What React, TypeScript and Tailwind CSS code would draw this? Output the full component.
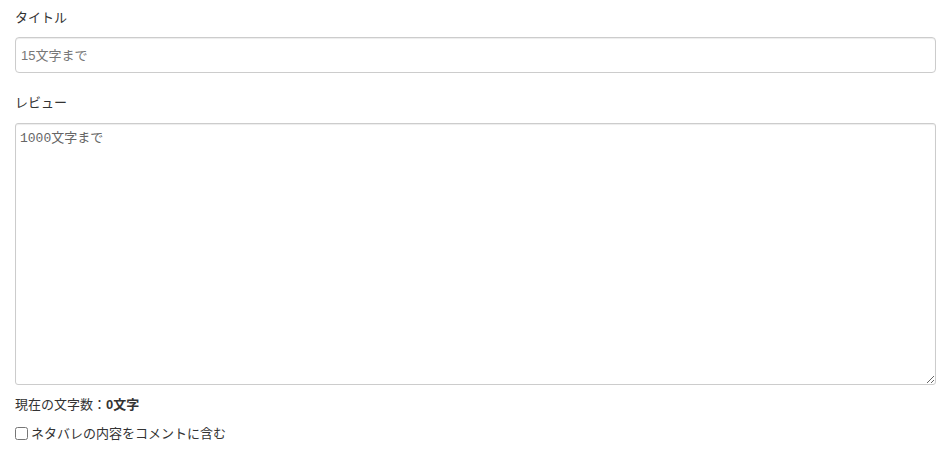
import { useState } from "react";

export default function App() {
  const [title, setTitle] = useState("");
  const [review, setReview] = useState("");
  const [spoiler, setSpoiler] = useState(false);

  return (
    <div className="min-h-screen bg-white pt-[8px] pl-[15px] pr-[10px] text-[13px] text-[#333] font-['Liberation_Sans','Noto_Sans_CJK_JP',sans-serif]">
      {/* Title */}
      <label className="block h-[19px] leading-[19px]">タイトル</label>
      <input
        type="text"
        value={title}
        onChange={(e) => setTitle(e.target.value)}
        placeholder="15文字まで"
        className="mt-[10px] block w-full h-[36px] px-[5px] rounded-[4px] border border-[#ccc] shadow-[inset_0_1px_1px_rgba(0,0,0,0.075)] text-[13px] font-['Liberation_Sans','Noto_Sans_CJK_JP',sans-serif] placeholder:text-[#777] outline-none"
      />

      {/* Review */}
      <label className="mt-[20px] block h-[19px] leading-[19px]">レビュー</label>
      <textarea
        value={review}
        onChange={(e) => setReview(e.target.value)}
        placeholder="1000文字まで"
        className="mt-[11px] block w-full h-[262px] px-[4px] py-[6px] rounded-[3px] border border-[#ccc] shadow-[inset_0_1px_1px_rgba(0,0,0,0.075)] text-[13px] leading-[18px] font-['Liberation_Mono','Noto_Sans_CJK_JP',monospace] placeholder:text-[#666] outline-none"
      />

      <p className="mt-[10px] h-[19px] leading-[19px]">
        現在の文字数：<span className="font-bold">{review.length}文字</span>
      </p>

      <label className="mt-[10px] flex items-center h-[19px] leading-[19px]">
        <input
          type="checkbox"
          checked={spoiler}
          onChange={(e) => setSpoiler(e.target.checked)}
          className="m-0 mr-[3px] w-[13px] h-[13px]"
        />
        ネタバレの内容をコメントに含む
      </label>
    </div>
  );
}
